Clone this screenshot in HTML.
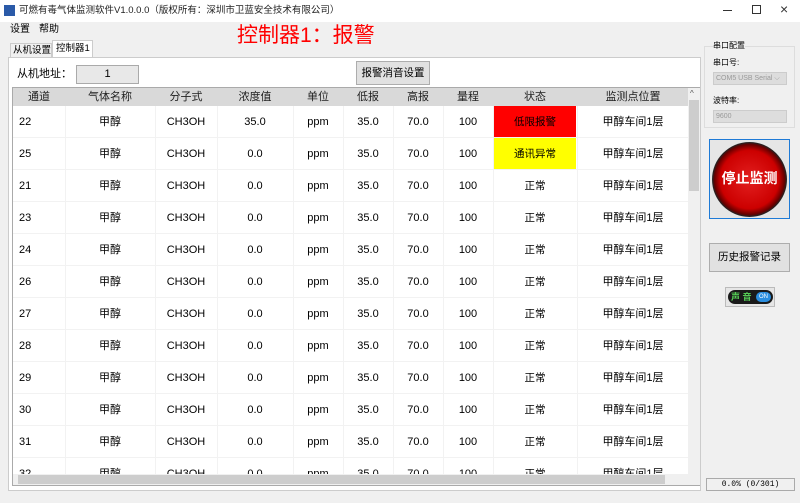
<!DOCTYPE html>
<html><head><meta charset="utf-8"><style>
*{margin:0;padding:0;box-sizing:border-box}
body{width:800px;height:503px;overflow:hidden;background:#f0f0f0;font-family:"Liberation Sans","Noto Sans CJK SC",sans-serif;font-size:11px;color:#000;position:relative}
.a{position:absolute;white-space:nowrap}
.c{position:absolute;text-align:center;white-space:nowrap}
</style></head><body>
<div class="a" style="left:0;top:0;width:800px;height:22px;background:#fff"></div>
<div class="a" style="left:4px;top:5px;width:11px;height:11px;background:#2a5aa8"></div>
<div class="a" style="left:19px;top:4px;font-size:9.5px;line-height:14px;color:#222">可燃有毒气体监测软件V1.0.0.0（版权所有：深圳市卫蓝安全技术有限公司）</div>
<div class="a" style="left:723px;top:10px;width:9px;height:1px;background:#333"></div>
<div class="a" style="left:752px;top:5px;width:9px;height:9px;border:1px solid #333"></div>
<div class="a" style="left:780px;top:1px;font-size:14px;color:#333">×</div>
<div class="a" style="left:10px;top:23px;font-size:10px;line-height:14px">设置</div>
<div class="a" style="left:39px;top:23px;font-size:10px;line-height:14px">帮助</div>
<div class="a" style="left:237px;top:22px;font-size:21px;color:#f00;line-height:28px">控制器1：报警</div>
<div class="a" style="left:10px;top:43px;width:42px;height:15px;border:1px solid #ccc;border-bottom:none;font-size:9.5px;line-height:13px;padding-left:2px">从机设置</div>
<div class="a" style="left:52px;top:40px;width:41px;height:18px;background:#fff;border:1px solid #ccc;border-bottom:none;font-size:9.5px;line-height:16px;padding-left:3px">控制器1</div>
<div class="a" style="left:8px;top:57px;width:693px;height:434px;background:#fff;border:1px solid #ccc"></div>
<div class="a" style="left:17px;top:67px;font-size:11px;line-height:15px">从机地址：</div>
<div class="c" style="left:76px;top:65px;width:63px;height:19px;background:#e8e8e8;border:1px solid #aaa;line-height:17px">1</div>
<div class="c" style="left:356px;top:61px;width:74px;height:24px;background:#e1e1e1;border:1px solid #adadad;line-height:22px;font-size:10.5px">报警消音设置</div>
<div class="a" style="left:12px;top:87px;width:688px;height:399px;border:1px solid #aaa;overflow:hidden;background:#fff">
<div class="a" style="left:0;top:0;width:676px;height:18px;background:#d9d9d9"></div>
<div style="position:absolute;left:0;top:0" id="t"></div>
</div>
<div class="a" style="left:688px;top:88px;width:12px;height:386px;background:#f0f0f0"></div>
<div class="a" style="left:689px;top:100px;width:10px;height:91px;background:#cdcdcd"></div>
<div class="a" style="left:690px;top:89px;font-size:8px;color:#555">^</div>
<div class="a" style="left:13px;top:474px;width:687px;height:11px;background:#f0f0f0"></div>
<div class="a" style="left:18px;top:475px;width:647px;height:9px;background:#cdcdcd"></div>
<div class="a" style="left:706px;top:478px;width:89px;height:13px;border:1px solid #aaa;font-size:8px;text-align:center;line-height:11px;font-family:'Liberation Mono',monospace">0.0% (0/301)</div>
<div class="a" style="left:704px;top:46px;width:91px;height:82px;border:1px solid #ddd"></div>
<div class="a" style="left:713px;top:40px;font-size:8px;line-height:11px;background:#f0f0f0">串口配置</div>
<div class="a" style="left:713px;top:57px;font-size:8px;line-height:11px">串口号:</div>
<div class="a" style="left:713px;top:72px;width:74px;height:13px;background:#ddd;border:1px solid #ccc;font-size:7px;color:#999;padding-left:2px;line-height:11px">COM5 USB Serial ⌵</div>
<div class="a" style="left:713px;top:95px;font-size:8px;line-height:11px">波特率:</div>
<div class="a" style="left:713px;top:110px;width:74px;height:13px;background:#ddd;border:1px solid #ccc;font-size:7px;color:#999;padding-left:2px;line-height:11px">9600</div>
<div class="a" style="left:709px;top:139px;width:81px;height:80px;background:#e6e6e6;border:1px solid #1e7ad6"></div>
<div class="a" style="left:712px;top:142px;width:75px;height:75px;border-radius:50%;background:radial-gradient(circle at 50% 50%,#e32020 0,#c00 55%,#600 66%,#222 70%,#ddd 75%,#888 85%,#555 100%)"></div>
<div class="c" style="left:709px;top:168px;width:81px;font-size:14px;line-height:20px;font-weight:bold;color:#fff">停止监测</div>
<div class="c" style="left:709px;top:243px;width:81px;height:29px;background:#e1e1e1;border:1px solid #adadad;line-height:27px;font-size:10.5px">历史报警记录</div>
<div class="a" style="left:725px;top:287px;width:50px;height:20px;border:1px solid #bbb;background:#e6e6e6"></div>
<div class="a" style="left:728px;top:290px;width:45px;height:14px;border-radius:7px;background:#1a1a1a"></div>
<div class="a" style="left:731px;top:291px;font-size:9px;line-height:12px;color:#5c5;font-weight:bold">声 音</div>
<div class="a" style="left:756px;top:292px;width:15px;height:10px;border-radius:5px;background:#2a8ee0;font-size:6px;color:#fff;text-align:center;line-height:10px">ON</div>
<script>
var cols=[[0,52],[52,90],[142,62],[204,76],[280,50],[330,50],[380,50],[430,50],[480,84],[564,112]];
var hd=["通道","气体名称","分子式","浓度值","单位","低报","高报","量程","状态","监测点位置"];
var ids=[22,25,21,23,24,26,27,28,29,30,31,32];
var h="";
for(var i=0;i<10;i++)h+='<div class="c" style="left:'+cols[i][0]+'px;top:0;height:18px;line-height:18px;width:'+cols[i][1]+'px;color:#222">'+hd[i]+'</div>';
for(var r=0;r<12;r++){var y=18+32*r;
h+='<div class="a" style="left:0;top:'+(y+31)+'px;width:676px;height:1px;background:#f2f2f2"></div>';
var st=r==0?"低限报警":r==1?"通讯异常":"正常";
var bg=r==0?"#f00":r==1?"#ff0":"";
var v=[ids[r],"甲醇","CH3OH",r==0?"35.0":"0.0","ppm","35.0","70.0","100",st,"甲醇车间1层"];
for(var i=0;i<10;i++){var c=cols[i];
if(i>0)h+='<div class="a" style="left:'+c[0]+'px;top:'+y+'px;width:1px;height:32px;background:#f2f2f2"></div>';
if(i==8&&bg)h+='<div class="a" style="left:'+(c[0]+1)+'px;top:'+y+'px;width:'+(c[1]-2)+'px;height:31px;background:'+bg+'"></div>';
h+='<div class="'+(i==0?'a':'c')+'" style="left:'+(i==0?6:c[0])+'px;top:'+y+'px;height:32px;line-height:32px;width:'+c[1]+'px;font-size:'+(i==8?'10.5px':'11px')+'">'+v[i]+'</div>';}}
document.getElementById('t').innerHTML=h;
</script>
</body></html>
